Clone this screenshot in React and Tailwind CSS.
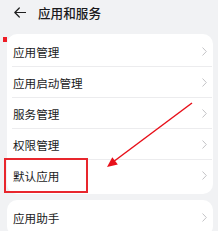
const items = ['应用管理', '应用启动管理', '服务管理', '权限管理', '默认应用']

function Row({ label, last }) {
  return (
    <div className="relative flex items-center h-[31px] pl-[6px] pr-[3px]">
      <span className="flex-1 text-[11.6px] text-[#1a1a1c] leading-none pt-[3px]">{label}</span>
      <svg width="5" height="9" viewBox="0 0 5 9" className="mr-[3px]">
        <polyline points="0.5,0.5 4.3,4.5 0.5,8.5" fill="none" stroke="#c4c4c6" strokeWidth="1" />
      </svg>
      {!last && <div className="absolute left-[5px] right-[1px] bottom-0 h-px bg-[#ececee]" />}
    </div>
  )
}

export default function App() {
  return (
    <div className="relative w-[218px] h-[231px] overflow-hidden bg-[#f1f2f4] font-['Noto_Sans_CJK_SC','Noto_Sans',sans-serif]">
      <header className="flex items-center h-[25px] pl-[14px]">
        <svg width="12" height="11" viewBox="0 0 12 11">
          <path d="M11.5 5.5H0.8M5.3 1L0.8 5.5L5.3 10" fill="none" stroke="#1f1f1f" strokeWidth="1.2" strokeLinecap="round" strokeLinejoin="round" />
        </svg>
        <h1 className="ml-[12px] text-[12.6px] font-medium text-[#1a1a1c] leading-none pt-[1px]">应用和服务</h1>
      </header>

      <div className="mt-[9px] ml-[7px] mr-[5px] bg-white rounded-[10px] pt-[2px] pb-[3px]">
        {items.map((label, i) => (
          <Row key={label} label={label} last={i === items.length - 1} />
        ))}
      </div>

      <div className="mt-[6px] ml-[7px] mr-[5px] bg-white rounded-[10px] pt-[2px] pb-[3px]">
        <Row label="应用助手" last />
      </div>

      {/* annotations drawn over the screenshot */}
      <div className="absolute left-[3px] top-[37px] w-[4px] h-[5px] bg-[#ee1c25]" />
      <div className="absolute left-[4px] top-[158px] w-[84px] h-[35px] border-2 border-[#e8262d]" />
      <svg className="absolute inset-0 pointer-events-none" width="218" height="231" viewBox="0 0 218 231">
        <line x1="192" y1="103" x2="113" y2="162" stroke="#e8101a" strokeWidth="1.5" />
        <polygon points="107,167 117.8,164.5 112.3,157.3" fill="#e8101a" />
      </svg>
    </div>
  )
}
